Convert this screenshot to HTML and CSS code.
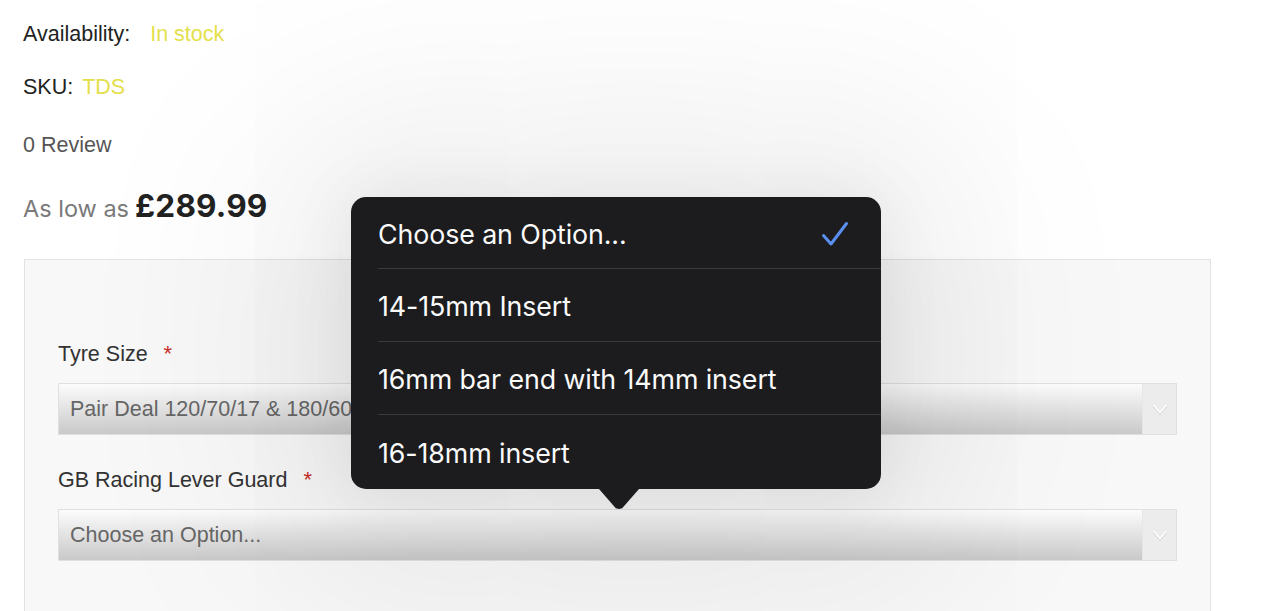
FILE: index.html
```html
<!DOCTYPE html>
<html>
<head>
<meta charset="utf-8">
<link rel="stylesheet" href="styles.css">
</head>
<body>
<div class="page">
  <div class="info-row avail"><span class="lbl">Availability:</span><span class="yellow stock">In stock</span></div>
  <div class="info-row sku"><span class="lbl">SKU:</span><span class="yellow sku-val">TDS</span></div>
  <div class="info-row review">0 Review</div>
  <div class="price-row"><span class="aslow">As low as</span> <span class="price">£289.99</span></div>
  <div class="options-box">
    <div class="field">
      <div class="field-label">Tyre Size <span class="req">*</span></div>
      <div class="select">
        <div class="select-value">Pair Deal 120/70/17 &amp; 180/60/17</div>
        <div class="select-arrow"><svg width="16" height="11" viewBox="0 0 16 11"><path d="M1.5 2.2 L8 10 L14.5 2.2" fill="none" stroke="#c4c4c4" stroke-width="1.1"/><path d="M1.5 1 L8 8.8 L14.5 1" fill="none" stroke="#ffffff" stroke-width="1.5"/></svg></div>
      </div>
    </div>
    <div class="field field2">
      <div class="field-label">GB Racing Lever Guard <span class="req">*</span></div>
      <div class="select">
        <div class="select-value">Choose an Option...</div>
        <div class="select-arrow"><svg width="16" height="11" viewBox="0 0 16 11"><path d="M1.5 2.2 L8 10 L14.5 2.2" fill="none" stroke="#c4c4c4" stroke-width="1.1"/><path d="M1.5 1 L8 8.8 L14.5 1" fill="none" stroke="#ffffff" stroke-width="1.5"/></svg></div>
      </div>
    </div>
  </div>
</div>
<div class="popover">
  <ul class="menu">
    <li class="item selected"><span>Choose an Option...</span><svg class="check" width="28" height="26" viewBox="0 0 28 26"><path d="M2.5 14.5 L10 23 L25.5 2.5" fill="none" stroke="#5a8ff0" stroke-width="3" stroke-linecap="round" stroke-linejoin="round"/></svg></li>
    <li class="item">14-15mm Insert</li>
    <li class="item">16mm bar end with 14mm insert</li>
    <li class="item">16-18mm insert</li>
  </ul>
  <div class="popover-tail"></div>
</div>
</body>
</html>
```
FILE: styles.css
```css
html, body {
  margin: 0;
  padding: 0;
  background: #ffffff;
  overflow: hidden;
}
body {
  width: 1280px;
  height: 611px;
  position: relative;
  font-family: "Liberation Sans", Arial, sans-serif;
}
.page {
  padding: 21px 0 0 23px;
}
.info-row {
  font-size: 21.5px;
  line-height: 26px;
  height: 26px;
  color: #222;
}
.stock {
  margin-left: 20px;
}
.sku {
  margin-top: 27px;
}
.sku-val {
  margin-left: 9px;
}
.review {
  margin-top: 32px;
  color: #555;
}
.yellow {
  color: #e4e04a;
}
.price-row {
  margin-top: 30px;
  height: 36px;
  line-height: 36px;
  display: flex;
  align-items: baseline;
  gap: 6px;
  font-family: Inter, "Open Sans", sans-serif;
}
.aslow {
  font-size: 23.5px;
  color: #7a7a7a;
  font-weight: 400;
}
.price {
  font-size: 31.5px;
  font-weight: 700;
  color: #222;
  letter-spacing: 0.2px;
}
.options-box {
  margin-top: 35px;
  margin-left: 1px;
  width: 1187px;
  height: 360px;
  border: 1px solid #e2e2e2;
  border-bottom: none;
  background: #f8f8f8;
  box-sizing: border-box;
  padding: 81px 33px 0 33px;
}
.field-label {
  font-size: 21.5px;
  color: #333;
  line-height: 26px;
  height: 26px;
}
.req {
  color: #c8302a;
  margin-left: 10px;
  font-size: 22px;
}
.select {
  margin-top: 16px;
  height: 52px;
  display: flex;
  border: 1px solid #e0e0e0;
  box-sizing: border-box;
  width: 1119px;
}
.select-value {
  flex: 1;
  background: linear-gradient(#fcfcfc 0%, #eaeaea 35%, #d8d8d8 70%, #c9c9c9 100%);
  color: #666;
  font-size: 21.5px;
  padding-left: 11px;
  display: flex;
  align-items: center;
  border-right: 1px solid #e6e6e6;
}
.select-arrow {
  width: 33px;
  background: #ececec;
  display: flex;
  align-items: center;
  justify-content: center;
}
.field2 {
  margin-top: 32px;
}
.popover {
  position: absolute;
  left: 351px;
  top: 197px;
  width: 530px;
  height: 292px;
  background: #1c1c1e;
  border-radius: 15px;
  box-shadow: 0 10px 220px 70px rgba(0, 0, 0, 0.09), 0 0 60px 10px rgba(0,0,0,0.05);
  font-family: Inter, Roboto, sans-serif;
  color: #fafafa;
}
.menu {
  list-style: none;
  margin: 0;
  padding: 0 0 0 27px;
}
.item {
  height: 73px;
  display: flex;
  align-items: center;
  justify-content: space-between;
  font-size: 26.8px;
  letter-spacing: -0.1px;
  border-bottom: 1px solid #3a3a3c;
  box-sizing: border-box;
  padding-right: 32px;
  padding-top: 2px;
}
.item:last-child {
  border-bottom: none;
}
.selected {
  height: 72px;
  padding-top: 2px;
}
.popover-tail {
  position: absolute;
  left: 248px;
  bottom: -20px;
  width: 40px;
  height: 20px;
  background: #1c1c1e;
  clip-path: polygon(0 0, 100% 0, 58% 96%, 50% 100%, 42% 96%);
}
```
